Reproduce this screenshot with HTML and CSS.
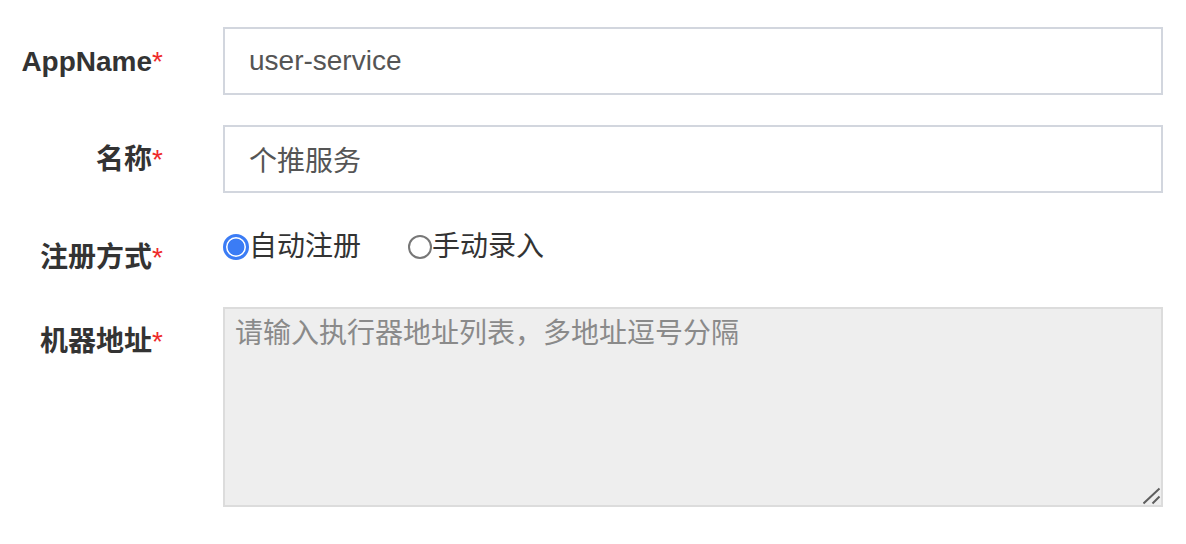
FILE: index.html
```html
<!DOCTYPE html>
<html lang="zh-CN">
<head>
<meta charset="utf-8">
<title>执行器</title>
<link rel="stylesheet" href="styles.css">
</head>
<body>
<form class="form">
  <div class="row">
    <label class="label">AppName<span class="req">*</span></label>
    <input class="input" type="text" value="user-service">
  </div>
  <div class="row">
    <label class="label">名称<span class="req">*</span></label>
    <input class="input" type="text" value="个推服务">
  </div>
  <div class="row">
    <label class="label">注册方式<span class="req">*</span></label>
    <div class="radios">
      <label class="radio"><input type="radio" name="type" checked>自动注册</label>
      <label class="radio"><input type="radio" name="type">手动录入</label>
    </div>
  </div>
  <div class="row">
    <label class="label">机器地址<span class="req">*</span></label>
    <div class="textarea-wrap">
      <textarea class="textarea" readonly placeholder="请输入执行器地址列表，多地址逗号分隔"></textarea>
      <svg class="grip" width="18" height="18" viewBox="0 0 18 18" aria-hidden="true">
        <path d="M0.5 16.5 L16.5 1.5 M9.5 16.5 L16.5 9.5" stroke="#5f5f5f" stroke-width="2" fill="none"/>
      </svg>
    </div>
  </div>
</form>
</body>
</html>
```

FILE: styles.css
```css
html, body {
  margin: 0;
  padding: 0;
  background: #fff;
}
body {
  font-family: "Liberation Sans", "Noto Sans CJK SC", sans-serif;
  font-size: 28px;
  color: #333;
}
.form {
  display: flex;
  flex-direction: column;
  gap: 30px;
  padding: 27px 23px 0 0;
}
.row {
  display: grid;
  grid-template-columns: 163px 1fr;
  column-gap: 60px;
  align-items: start;
}
.label {
  text-align: right;
  font-weight: bold;
  line-height: 38px;
  padding-top: 16px;
  color: #333;
  white-space: nowrap;
}
.req {
  color: #ee2a2a;
  font-weight: normal;
}
.input {
  box-sizing: border-box;
  height: 68px;
  width: 100%;
  margin: 0;
  border: 2px solid #d2d6de;
  border-radius: 0;
  padding: 0 24px;
  font-family: inherit;
  font-size: 28px;
  color: #555;
  background: #fff;
  outline: none;
}
.radios {
  display: flex;
  gap: 47px;
  height: 54px;
  padding-top: 4px;
  box-sizing: border-box;
  line-height: 40px;
}
.radio {
  display: flex;
  align-items: center;
  height: 40px;
  color: #333;
}
.radio input {
  appearance: none;
  -webkit-appearance: none;
  box-sizing: border-box;
  margin: 0;
  width: 24px;
  height: 24px;
  border: 2px solid #777;
  border-radius: 50%;
  background: #fff;
}
.radio input:checked {
  width: 26px;
  height: 26px;
  border: 3px solid #3b7cf5;
  background: radial-gradient(circle, #3b7cf5 0 8px, #fff 8.8px);
}
.textarea-wrap {
  position: relative;
}
.textarea {
  box-sizing: border-box;
  display: block;
  width: 100%;
  height: 200px;
  margin: 0;
  border: 2px solid #dcdcdc;
  border-radius: 0;
  background: #eee;
  padding: 5px 10px;
  font-family: inherit;
  font-size: 28px;
  line-height: 40px;
  color: #555;
  outline: none;
}
.textarea::placeholder {
  color: #8a8a8a;
}
.grip {
  position: absolute;
  right: 2px;
  bottom: 2px;
  background: #eee;
  pointer-events: none;
}
```
